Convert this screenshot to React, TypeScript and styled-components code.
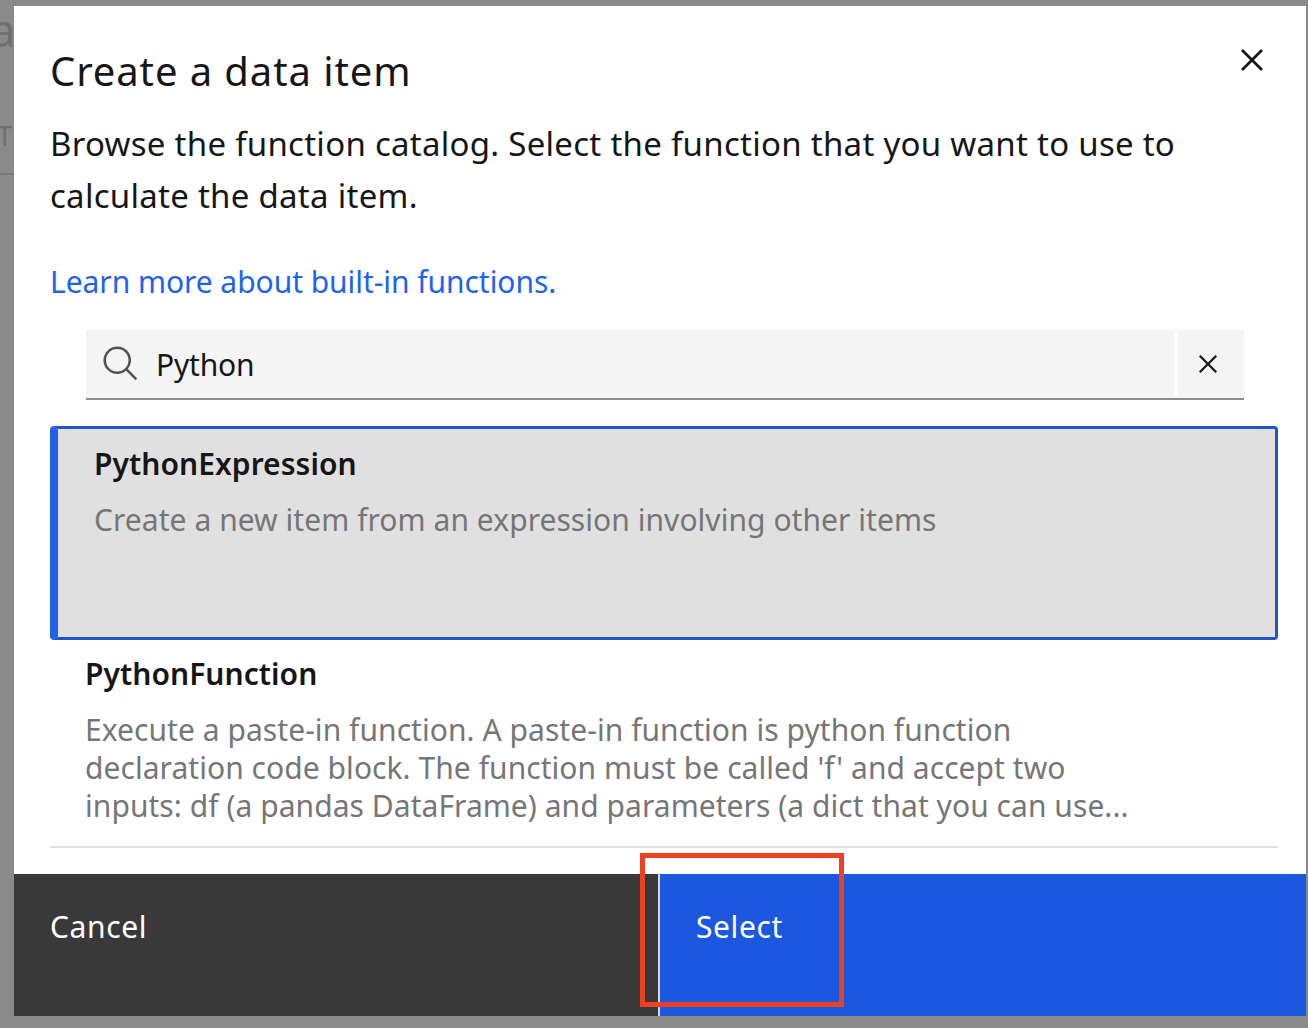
import React from 'react';
import styled, { createGlobalStyle } from 'styled-components';

const GlobalStyle = createGlobalStyle`
  html, body {
    margin: 0;
    padding: 0;
    background: #8a8a8a;
  }
  * {
    box-sizing: border-box;
  }
`;

const Page = styled.div`
  position: relative;
  width: 1308px;
  height: 1028px;
  padding: 6px 2px 12px 14px;
  overflow: hidden;
  font-family: "Noto Sans", "Liberation Sans", sans-serif;
  color: #161616;
`;

const BehindLetter = styled.span<{ $top: number; $left: number; $size: number }>`
  position: absolute;
  left: ${(p) => p.$left}px;
  top: ${(p) => p.$top}px;
  font-size: ${(p) => p.$size}px;
  line-height: 1;
  color: #6f6f6f;
`;

const BehindRule = styled.div`
  position: absolute;
  left: 0;
  top: 173px;
  width: 14px;
  height: 2px;
  background: #74798f;
`;

const Modal = styled.div`
  position: relative;
  height: 1010px;
  background: #fff;
  display: flex;
  flex-direction: column;
`;

const Header = styled.div`
  padding: 39px 37px 0 36px;
  position: relative;
`;

const Title = styled.h2`
  margin: 0;
  font-size: 40px;
  line-height: 52px;
  font-weight: 400;
  letter-spacing: 0.9px;
`;

const CloseButton = styled.button`
  position: absolute;
  top: 32px;
  right: 32px;
  width: 44px;
  height: 44px;
  padding: 0;
  border: 0;
  background: none;
  color: #161616;
  display: flex;
`;

const Description = styled.p`
  margin: 21px 0 0;
  font-size: 33px;
  line-height: 52px;
  letter-spacing: 0.27px;
`;

const LearnLink = styled.a`
  display: block;
  margin-top: 40px;
  font-size: 30px;
  line-height: 40px;
  letter-spacing: -0.05px;
  color: #1f62ee;
  text-decoration: none;
`;

const SearchBar = styled.div`
  margin: 28px 62px 0 72px;
  height: 70px;
  display: flex;
  align-items: center;
  background: #f4f4f4;
  border-bottom: 2px solid #8d8d8d;
`;

const SearchIcon = styled.svg`
  flex: none;
  width: 40px;
  height: 40px;
  margin-left: 15px;
  fill: #525252;
`;

const SearchValue = styled.span`
  flex: 1;
  margin-left: 15px;
  font-size: 30px;
  letter-spacing: -0.2px;
`;

const ClearButton = styled.button`
  width: 70px;
  height: 62px;
  padding: 0 6px 0 0;
  border: 0;
  border-left: 4px solid #fff;
  background: none;
  color: #161616;
  display: flex;
  align-items: center;
  justify-content: center;
`;

const CloseGlyph = styled.svg<{ $size: number }>`
  width: ${(p) => p.$size}px;
  height: ${(p) => p.$size}px;
  fill: currentColor;
`;

const List = styled.div`
  margin: 26px 28px 0 36px;
  display: flex;
  flex-direction: column;
`;

const Item = styled.div<{ $selected?: boolean }>`
  height: ${(p) => (p.$selected ? 214 : 208)}px;
  overflow: hidden;
  padding: ${(p) => (p.$selected ? '15px 40px 0 36px' : '14px 40px 0 35px')};
  background: ${(p) => (p.$selected ? '#e0e0e0' : '#fff')};
  border: ${(p) => (p.$selected ? '3px solid #1f57c8' : '0')};
  border-left: ${(p) => (p.$selected ? '8px solid #2160e8' : '0')};
  border-bottom: ${(p) => (p.$selected ? '3px solid #1f57c8' : '2px solid #e0e0e0')};
  border-radius: ${(p) => (p.$selected ? '4px' : '0')};
`;

const ItemName = styled.div`
  font-size: 30px;
  line-height: 40px;
  font-weight: 600;
  letter-spacing: 0.05px;
`;

const ItemText = styled.div`
  margin-top: 17px;
  font-size: 30px;
  line-height: 38px;
  letter-spacing: 0.05px;
  color: #767676;
`;

const Footer = styled.div`
  margin-top: auto;
  height: 142px;
  display: grid;
  grid-template-columns: 644px 1fr;
`;

const FooterButton = styled.button<{ $primary?: boolean }>`
  padding: 0 0 38px 36px;
  border: 0;
  border-left: ${(p) => (p.$primary ? '2px solid #d8d8d8' : '0')};
  background: ${(p) => (p.$primary ? '#1c57e0' : '#393939')};
  color: #fff;
  font-family: inherit;
  font-size: 30px;
  letter-spacing: 0.6px;
  text-align: left;
`;

const Callout = styled.div`
  position: absolute;
  left: 640px;
  top: 853px;
  width: 204px;
  height: 154px;
  border: 5px solid #ee4023;
`;

const closePath = 'M24 9.4L22.6 8 16 14.6 9.4 8 8 9.4 14.6 16 8 22.6 9.4 24 16 17.4 22.6 24 24 22.6 17.4 16 24 9.4z';

const App = () => {
  return (
    <Page>
      <GlobalStyle />
      <BehindLetter $left={-10} $top={6} $size={46}>a</BehindLetter>
      <BehindLetter $left={-3} $top={121} $size={28}>T</BehindLetter>
      <BehindRule />
      <Modal>
        <Header>
          <Title>Create a data item</Title>
          <CloseButton aria-label="Close">
            <CloseGlyph $size={44} viewBox="0 0 32 32">
              <path d={closePath} />
            </CloseGlyph>
          </CloseButton>
          <Description>
            Browse the function catalog. Select the function that you want to use to
            <br />
            calculate the data item.
          </Description>
          <LearnLink href="#">Learn more about built-in functions.</LearnLink>
        </Header>
        <SearchBar>
          <SearchIcon viewBox="0 0 32 32">
            <path d="M29,27.5859l-7.5521-7.5521a11.0177,11.0177,0,1,0-1.4141,1.4141L27.5859,29ZM4,13a9,9,0,1,1,9,9A9.01,9.01,0,0,1,4,13Z" />
          </SearchIcon>
          <SearchValue>Python</SearchValue>
          <ClearButton aria-label="Clear">
            <CloseGlyph $size={36} viewBox="0 0 32 32">
              <path d={closePath} />
            </CloseGlyph>
          </ClearButton>
        </SearchBar>
        <List>
          <Item $selected>
            <ItemName>PythonExpression</ItemName>
            <ItemText>Create a new item from an expression involving other items</ItemText>
          </Item>
          <Item>
            <ItemName>PythonFunction</ItemName>
            <ItemText>
              Execute a paste-in function. A paste-in function is python function
              <br />
              declaration code block. The function must be called 'f' and accept two
              <br />
              inputs: df (a pandas DataFrame) and parameters (a dict that you can use...
            </ItemText>
          </Item>
        </List>
        <Footer>
          <FooterButton>Cancel</FooterButton>
          <FooterButton $primary>Select</FooterButton>
        </Footer>
      </Modal>
      <Callout />
    </Page>
  );
};

export default App;
